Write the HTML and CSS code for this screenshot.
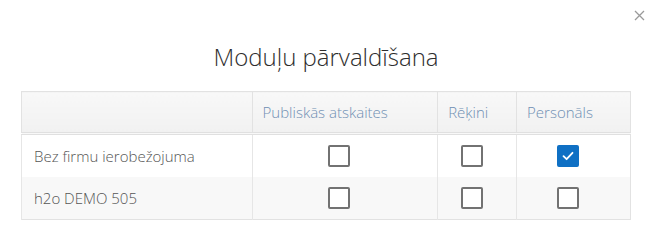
FILE: index.html
```html
<!DOCTYPE html>
<html lang="lv">
<head>
<meta charset="utf-8">
<title>Moduļu pārvaldīšana</title>
<link rel="stylesheet" href="styles.css">
</head>
<body>
<div class="modal">
  <button class="close" type="button" aria-label="Aizvērt">
    <svg width="11" height="11" viewBox="0 0 11 11"><path d="M1 1L10 10M10 1L1 10" stroke="#9a9a9a" stroke-width="1.3" fill="none"/></svg>
  </button>
  <h2 class="title">Moduļu pārvaldīšana</h2>
  <table class="grid">
    <colgroup>
      <col class="c-name"><col class="c-pub"><col class="c-rek"><col class="c-pers">
    </colgroup>
    <thead>
      <tr>
        <th></th>
        <th>Publiskās atskaites</th>
        <th>Rēķini</th>
        <th>Personāls</th>
      </tr>
    </thead>
    <tbody>
      <tr>
        <td class="name">Bez firmu ierobežojuma</td>
        <td class="cb"><span class="box"></span></td>
        <td class="cb"><span class="box"></span></td>
        <td class="cb"><span class="box checked"><svg width="14" height="12" viewBox="0 0 14 12"><path d="M2.5 6.2L5.6 9.2L11.5 2.8" stroke="#fff" stroke-width="1.8" fill="none" stroke-linecap="round" stroke-linejoin="round"/></svg></span></td>
      </tr>
      <tr class="alt">
        <td class="name">h2o DEMO 505</td>
        <td class="cb"><span class="box"></span></td>
        <td class="cb"><span class="box"></span></td>
        <td class="cb"><span class="box"></span></td>
      </tr>
    </tbody>
  </table>
</div>
</body>
</html>
```
FILE: styles.css
```css
html, body {
  margin: 0;
  padding: 0;
  background: #fff;
}
body {
  font-family: "Open Sans", "Liberation Sans", sans-serif;
  color: #555;
}
.modal {
  position: relative;
  padding: 41px 21px 0;
}
.close {
  position: absolute;
  top: 9px;
  right: 6px;
  width: 13px;
  height: 13px;
  padding: 1px;
  border: 0;
  background: transparent;
  display: flex;
  align-items: center;
  justify-content: center;
}
.title {
  margin: 0 0 18px;
  font-size: 24px;
  line-height: 32px;
  font-weight: 300;
  color: #2e2e2e;
  text-align: center;
}
.grid {
  width: 100%;
  border-collapse: collapse;
  border: 1px solid #e2e2e2;
  font-size: 15px;
  font-weight: 300;
}
.c-name { width: 231px; }
.c-pub { width: 186px; }
.c-rek { width: 79px; }
.c-pers { width: 114px; }
.grid th {
  height: 40px;
  padding: 0 10px;
  text-align: left;
  font-weight: 300;
  color: #6f8fb3;
  background: linear-gradient(#f8f8f8, #f1f1f1);
  border-left: 1px solid #e2e2e2;
  border-bottom: 3px double #e0e0e0;
}
.grid td {
  height: 42px;
  padding: 0 12px;
  border-left: 1px solid #e6e6e6;
}
.grid tr.alt td {
  background: #f8f8f8;
}
.grid td.name {
  color: #555;
}
.grid td.cb {
  text-align: center;
  padding: 0;
  font-size: 0;
}
.box {
  display: inline-flex;
  align-items: center;
  justify-content: center;
  box-sizing: border-box;
  width: 22px;
  height: 22px;
  margin-right: 11px;
  border: 2px solid #727272;
  border-radius: 2px;
  background: #fff;
  vertical-align: middle;
}
.box.checked {
  background: #0f70c4;
  border-color: #0f70c4;
}
```
